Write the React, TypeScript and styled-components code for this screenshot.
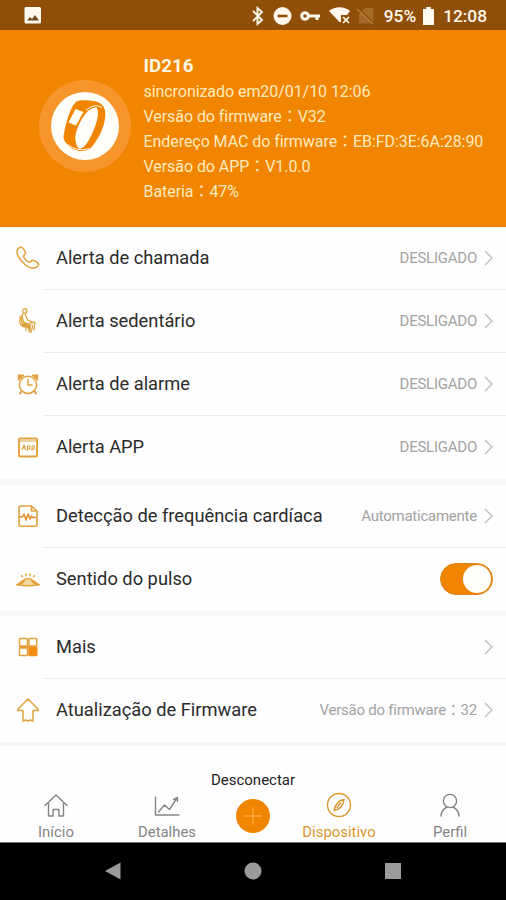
import React from 'react';
import styled, { createGlobalStyle } from 'styled-components';

const ORANGE = '#f28500';
const GOLD = '#dfa23c';

const GlobalStyle = createGlobalStyle`
  * { box-sizing: border-box; }
  body { margin: 0; background: #fff; }
`;

const Screen = styled.div`
  width: 506px;
  height: 900px;
  overflow: hidden;
  display: flex;
  flex-direction: column;
  background: #fefefe;
  font-family: Roboto, 'Noto Sans CJK TC', sans-serif;
  svg { display: block; flex: none; }
`;

const StatusBar = styled.header`
  height: 30px;
  flex: none;
  display: flex;
  align-items: center;
  justify-content: space-between;
  padding: 2px 19px 0 24px;
  background: #8f4f09;
`;

const StatusText = styled.span`
  font-size: 17.3px;
  line-height: 20px;
  font-weight: 500;
  color: #fff8ea;
  white-space: nowrap;
`;

const Device = styled.section`
  height: 197px;
  flex: none;
  display: flex;
  padding-left: 39px;
  background: ${ORANGE};
  border-bottom: 1px solid #e27d05;
`;

const Halo = styled.div`
  width: 92px;
  height: 92px;
  margin-top: 50px;
  border-radius: 50%;
  background: #f7952a;
  display: grid;
  place-items: center;
`;

const Disc = styled.div`
  width: 68px;
  height: 68px;
  border-radius: 50%;
  background: #fffef9;
`;

const Info = styled.div`
  margin: 24px 0 0 12.5px;
  display: flex;
  flex-direction: column;
`;

const DeviceName = styled.h1`
  margin: 0;
  font-size: 18.8px;
  line-height: 25px;
  font-weight: 700;
  color: #fff6e0;
`;

const InfoLine = styled.div`
  height: 25px;
  line-height: 25px;
  font-size: 16px;
  color: #ffebbd;
  white-space: nowrap;
  letter-spacing: -0.06px;
`;

const Group = styled.section<{ $gap: number }>`
  flex: none;
  border-bottom: ${(p) => p.$gap}px solid #f6f6f6;
`;

const Row = styled.div`
  height: 63px;
  display: flex;
  align-items: stretch;
`;

const IconCell = styled.div`
  width: 43px;
  padding: 0 0 2px 16px;
  display: flex;
  align-items: center;
`;

const RowBody = styled.div`
  flex: 1;
  display: flex;
  align-items: center;
  padding: 0 13px;
  border-bottom: 1px solid #ececec;
  ${Row}:last-child & { border-bottom-color: transparent; }
`;

const Label = styled.span`
  flex: 1;
  font-size: 18.3px;
  line-height: 24px;
  color: #2b2b2b;
  white-space: nowrap;
`;

const Value = styled.span`
  font-size: 15px;
  line-height: 24px;
  color: #a2a2a2;
  white-space: nowrap;
  margin-right: 7px;
  letter-spacing: -0.24px;
`;

const Switch = styled.button`
  width: 53px;
  height: 32px;
  padding: 1px;
  border: 1px solid #d98520;
  border-radius: 16px;
  background: ${ORANGE};
  display: flex;
  justify-content: flex-end;
`;

const Knob = styled.span`
  width: 28px;
  height: 28px;
  border-radius: 50%;
  background: #fffefb;
`;

const Footer = styled.footer`
  flex: 1;
  display: flex;
  flex-direction: column;
`;

const Disconnect = styled.button`
  margin: 23px 0 0;
  padding: 0;
  border: 0;
  background: none;
  font: 15px/22px Roboto, sans-serif;
  color: #222;
  text-align: center;
`;

const Tabs = styled.nav`
  height: 51px;
  display: grid;
  grid-template-columns: 112px 110px 62px 110px 112px;
`;

const Tab = styled.a<{ $active?: boolean }>`
  display: flex;
  flex-direction: column;
  align-items: center;
  padding-top: 1px;
  color: ${(p) => (p.$active ? '#dc962e' : '#858585')};
  span {
    font-size: 14.9px;
    line-height: 18px;
    margin-top: 5px;
    white-space: nowrap;
  }
`;

const AddButton = styled.button`
  width: 34px;
  height: 34px;
  margin: 8px auto 0;
  padding: 0;
  border: 0;
  border-radius: 50%;
  background: ${ORANGE};
`;

const SystemNav = styled.div`
  height: 58px;
  flex: none;
  display: flex;
  justify-content: center;
  padding-top: 19px;
  gap: 122px;
  background: #000;
  border-top: 1px solid #777;
`;

const iconProps = { width: 24, height: 26, viewBox: '0 0 24 26', fill: 'none', stroke: GOLD, strokeWidth: 1.5, strokeLinejoin: 'round' as const, strokeLinecap: 'round' as const };

const icons = {
  phone: (
    <svg {...iconProps}>
      <path d="M1.200 5.200C2 3.200 4 2 5.500 2.200c1.800 1 4 4.500 4 6-.2 1.500-2 1.800-2 3 .5 2.400 3.800 5.800 6 6 1.500-.2 1.800-1.900 3.200-2 2 .2 5.300 2.200 6 4-.2 2-3 4-5.700 4C10 23-.2 11.500 1.200 5.200Z" />
    </svg>
  ),
  seat: (
    <svg {...iconProps} strokeWidth={1.2}>
      <circle cx="8.800" cy="2.900" r="2.200" />
      <path d="M7 5.500C6 7 6.500 11 8 15l6 1 1.500 8h-2l-1.800-6-5-1C5 13 4.500 9 7 5.500ZM9 6l2.500 6 6 2.500M4 8v7c1 3 3 4 6 4v4M14 15l5-1-1 8M16 16l1 5" />
      <path d="M8 14.500l4.500 1.500 2 6-3-3-4-1Z" fill={GOLD} />
    </svg>
  ),
  alarm: (
    <svg {...iconProps}>
      <circle cx="12" cy="13.800" r="8.600" />
      <path d="M12 8.500v5.500h4" />
      <path d="M5.500 20.500l-1.500 2M18.500 20.500l1.500 2" strokeWidth="2" />
      <path d="M2.800 8.500v-4h4.500M21.200 8.500v-4h-4.500M3 7.500l3.800-3M21 7.500l-3.800-3" strokeWidth="2" />
    </svg>
  ),
  app: (
    <svg {...iconProps}>
      <rect x="3" y="4.500" width="18" height="18" rx="1" strokeWidth="1.900" />
      <path d="M3 7h18" strokeWidth="1" />
      <path d="M6 15.500l2-4.500 1.500 4.500M7 14h2M11.500 16.500V12h2.300v3h-2M16 16.500V12h2.300v3H16" strokeWidth="1.100" />
    </svg>
  ),
  heart: (
    <svg {...iconProps} strokeWidth={1.6}>
      <path d="M5 3h10.500l5.500 5v13.500q0 1.800-1.800 1.800H4.800Q3 23.300 3 21.500V5q0-2 2-2ZM15.500 3v5H21" />
      <path d="M3.500 14h3l1.500-3 2 6 2-6 2 5 1.500-3 1 1.500h3" strokeWidth="1.500" stroke="#e08d22" />
    </svg>
  ),
  wrist: (
    <svg {...iconProps}>
      <path d="M.8 18.500c4-.5 5-6 11.200-6s7.200 5.500 11.200 6c-6 1.300-16.400 1.300-22.400 0Z" fill="#f1d7a5" />
      <path d="M2 19c3-1.500 5-2 6-4M22 19c-3-1.500-5-2-6-4" strokeWidth="2" />
      <path d="M5.500 9.500l.8 1.300M10 8v1.800M14 8v1.800M18.500 9.500l-.8 1.300" strokeWidth="1.400" />
    </svg>
  ),
  more: (
    <svg {...iconProps}>
      <rect x="3.500" y="4.500" width="8" height="7.500" rx=".8" />
      <rect x="13" y="4.500" width="7.800" height="7.500" rx=".8" />
      <rect x="3.500" y="14" width="8" height="7.500" rx=".8" />
      <rect x="13" y="13" width="7.800" height="8.500" rx=".8" fill="#f58a10" stroke="#ee9124" />
      <path d="M4 12.900h8" stroke="#e79a35" strokeWidth="2" />
    </svg>
  ),
  upload: (
    <svg {...iconProps}>
      <path d="M12 2L1.800 12.200q-.3 1.300 1 1.300H7V24l2.500-1 2.500 1 2.500-1 2.500 1V13.500h4.200q1.300 0 1-1.300Z" />
    </svg>
  ),
};

const Chevron = () => (
  <svg width="9" height="16" viewBox="0 0 9 16" fill="none" stroke="#c2c2c2" strokeWidth="1.500">
    <path d="M1 1l7 7-7 7" />
  </svg>
);

type Item = { icon: keyof typeof icons; label: string; value?: string; toggle?: boolean };

const groups: { gap: number; items: Item[] }[] = [
  {
    gap: 6,
    items: [
      { icon: 'phone', label: 'Alerta de chamada', value: 'DESLIGADO' },
      { icon: 'seat', label: 'Alerta sedentário', value: 'DESLIGADO' },
      { icon: 'alarm', label: 'Alerta de alarme', value: 'DESLIGADO' },
      { icon: 'app', label: 'Alerta APP', value: 'DESLIGADO' },
    ],
  },
  {
    gap: 5,
    items: [
      { icon: 'heart', label: 'Detecção de frequência cardíaca', value: 'Automaticamente' },
      { icon: 'wrist', label: 'Sentido do pulso', toggle: true },
    ],
  },
  {
    gap: 4,
    items: [
      { icon: 'more', label: 'Mais' },
      { icon: 'upload', label: 'Atualização de Firmware', value: 'Versão do firmware：32' },
    ],
  },
];

const BandIcon = () => (
  <svg width="68" height="68" viewBox="0 0 68 68">
    <path d="M25.500 9.500C29 7.500 43 7.500 48.700 11c7 4 6.500 13 3.800 22.500-2 7-6 14-10.500 20-4 5-9 6-14 5.500-5-1-9-3-11.500-6.500-4-4-4.500-7-3.500-11C15 31 19 15 25.500 9.500Z" fill={ORANGE} />
    <path d="M45.500 15.500c-7 0-11 6-14 10.500-5 8-8 17-7 23 .5 4 2 6.500 4.500 8 5-2 8-7 11-13 4-8 6.500-16 7-22 .2-3-.2-5-1.500-6.500Z" fill="#fffef9" />
    <path d="M35 18.500c5-5 11-6 16-3M17 52.500c5 5 14 6.500 21 4" fill="none" stroke="#fffef9" strokeWidth="1" />
    <path d="M24.500 17l8 3-7.500 13.500-7.500-3Z" fill="#fffef9" />
  </svg>
);

const StatusIcons = () => (
  <svg width="126" height="22" viewBox="0 0 126 22" fill="none" stroke="#fff8ec">
    <path d="M2 6l9 9-4.500 4V3L11 7l-9 9" strokeWidth="1.900" />
    <circle cx="31.500" cy="11" r="9" fill="#fff8ec" stroke="none" />
    <path d="M26.500 11h10" stroke="#8f4f09" strokeWidth="2.600" />
    <circle cx="54" cy="11" r="3.300" strokeWidth="3" />
    <path d="M58 11h11M66 11v4" strokeWidth="3" />
    <path d="M78 6c6-5 15-5 21 0l-3 4h-6v7h-1.500Z" fill="#fff8ec" stroke="none" />
    <path d="M92 12l6 6M98 12l-6 6" strokeWidth="1.700" />
    <path d="M108 18.500V9l6-6h8.500v15.500Z" fill="#a56a28" stroke="none" />
    <path d="M106 3l17 16" stroke="#8f4f09" strokeWidth="2.500" />
    <path d="M106 4l16 15" stroke="#b9803c" strokeWidth="1.200" />
  </svg>
);

const StatusRight = styled.div`
  display: flex;
  align-items: center;
`;

const Cluster = styled.div`
  display: flex;
  align-items: center;
  gap: 7px;
  margin-right: 9px;
`;

const TabIcon = ({ children }: { children: React.ReactNode }) => (
  <svg width="26" height="26" viewBox="0 0 26 26" fill="none" stroke="currentColor" strokeWidth="1.400" strokeLinejoin="round" strokeLinecap="round">
    {children}
  </svg>
);

export default function App() {
  return (
    <Screen>
      <GlobalStyle />
      <StatusBar>
        <svg width="18" height="18" viewBox="0 0 18 18">
          <rect x=".5" y="0" width="16.500" height="16.500" rx="1.500" fill="#fffaf0" />
          <path d="M3 13.500l3-3.500 2 2 3-4 4 5.500Z" fill="#70491f" />
        </svg>
        <StatusRight>
          <Cluster>
            <StatusIcons />
            <StatusText>95%</StatusText>
            <svg width="11" height="18" viewBox="0 0 12 18" preserveAspectRatio="none">
              <path d="M3.500 0h5v2H12v16H0V2h3.500Z" fill="#fffaf0" />
            </svg>
          </Cluster>
          <StatusText>12:08</StatusText>
        </StatusRight>
      </StatusBar>
      <Device>
        <Halo>
          <Disc>
            <BandIcon />
          </Disc>
        </Halo>
        <Info>
          <DeviceName>ID216</DeviceName>
          <InfoLine>sincronizado em20/01/10 12:06</InfoLine>
          <InfoLine>Versão do firmware：V32</InfoLine>
          <InfoLine>Endereço MAC do firmware：EB:FD:3E:6A:28:90</InfoLine>
          <InfoLine>Versão do APP：V1.0.0</InfoLine>
          <InfoLine>Bateria：47%</InfoLine>
        </Info>
      </Device>
      {groups.map(({ gap, items }) => (
        <Group key={items[0].label} $gap={gap}>
          {items.map((item) => (
            <Row key={item.label}>
              <IconCell>{icons[item.icon]}</IconCell>
              <RowBody>
                <Label>{item.label}</Label>
                {item.value && <Value>{item.value}</Value>}
                {item.toggle ? (
                  <Switch aria-label={item.label}>
                    <Knob />
                  </Switch>
                ) : (
                  <Chevron />
                )}
              </RowBody>
            </Row>
          ))}
        </Group>
      ))}
      <Footer>
        <Disconnect>Desconectar</Disconnect>
        <Tabs>
          <Tab>
            <TabIcon>
              <path d="M2 13.500L13 3l11 10.500M5.500 11v13h4.500v-6.500h6V24h4.500V11" />
            </TabIcon>
            <span>Início</span>
          </Tab>
          <Tab>
            <TabIcon>
              <path d="M1.500 5v18H25M4.500 20l6-7 5 4.500L23 6M19.500 7.500l4-2v4" />
            </TabIcon>
            <span>Detalhes</span>
          </Tab>
          <AddButton aria-label="Desconectar">
            <svg width="34" height="34" viewBox="0 0 34 34" stroke="#fba83c" strokeWidth="1.400">
              <path d="M8 17h18M17 8v18" />
            </svg>
          </AddButton>
          <Tab $active>
            <TabIcon>
              <circle cx="13" cy="13" r="11.500" />
              <path d="M18 7.500c-4 .5-9 4-9.800 11 5-.5 9.500-5 9.800-11ZM11 15.500l3.500-4.500" />
            </TabIcon>
            <span>Dispositivo</span>
          </Tab>
          <Tab>
            <TabIcon>
              <circle cx="13" cy="9" r="6.600" />
              <path d="M4 24c.3-5 3-7.500 6-9M22 24c-.3-5-3-7.500-6-9" />
            </TabIcon>
            <span>Perfil</span>
          </Tab>
        </Tabs>
      </Footer>
      <SystemNav>
        <svg width="18" height="18" viewBox="0 0 18 18" fill="#9b9b9b">
          <path d="M1 9L16.500.5v17Z" />
        </svg>
        <svg width="18" height="18" viewBox="0 0 18 18" fill="#9b9b9b">
          <circle cx="9" cy="9" r="8.500" />
        </svg>
        <svg width="18" height="18" viewBox="0 0 18 18" fill="#9b9b9b">
          <rect x="1" y="1" width="16" height="16" />
        </svg>
      </SystemNav>
    </Screen>
  );
}
